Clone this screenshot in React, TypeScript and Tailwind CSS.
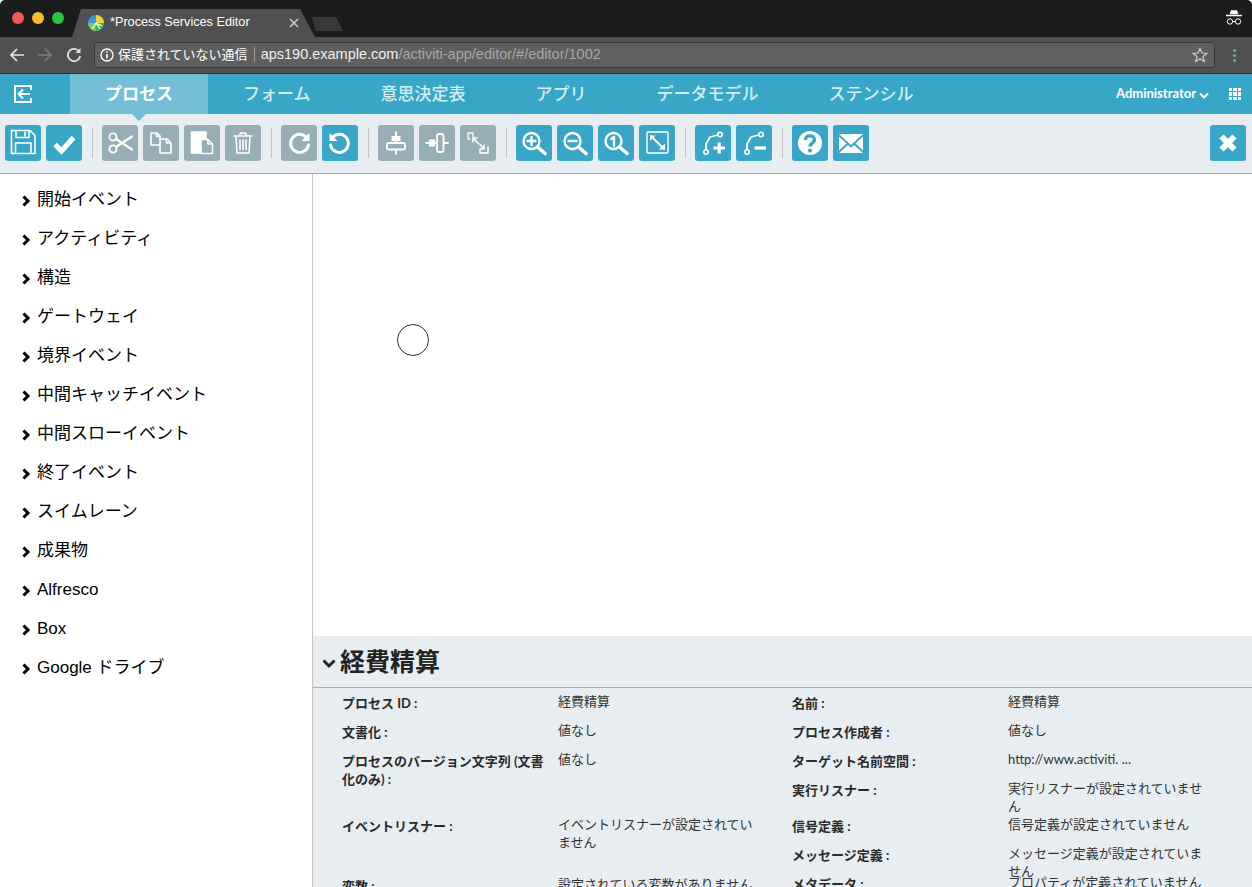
import React from "react";

const S = ({ children, fill = "none" }: { children: React.ReactNode; fill?: string }) => (
  <svg viewBox="0 0 36 36" width="36" height="36" fill={fill} stroke="white" strokeWidth="1.6" strokeLinecap="round" strokeLinejoin="round">
    {children}
  </svg>
);

const Btn = ({ off, children, cls = "" }: { off?: boolean; children: React.ReactNode; cls?: string }) => (
  <div className={`w-9 h-9 shrink-0 rounded-[3px] ${off ? "bg-[#98aeb6]" : "bg-[#38a7c7]"} ${cls}`}>{children}</div>
);

const Sep = () => <div className="w-px h-[30px] bg-[#c0c5ca] ml-[5px] mr-1 shrink-0" />;

const Chevron = ({ cls = "" }: { cls?: string }) => (
  <svg viewBox="0 0 10 12" width="10" height="12" className={cls} fill="none" stroke="black" strokeWidth="3">
    <path d="M2.5 1.5 L7 6 L2.5 10.5" />
  </svg>
);

const items = ["開始イベント", "アクティビティ", "構造", "ゲートウェイ", "境界イベント", "中間キャッチイベント", "中間スローイベント", "終了イベント", "スイムレーン", "成果物", "Alfresco", "Box", "Google ドライブ"];
const tabs = ["フォーム", "意思決定表", "アプリ", "データモデル", "ステンシル"];

const left: [string, string, string][] = [
  ["プロセス ID :", "経費精算", "h-[29px]"],
  ["文書化 :", "値なし", "h-[29px]"],
  ["プロセスのバージョン文字列 (文書化のみ) :", "値なし", "h-[65px]"],
  ["イベントリスナー :", "イベントリスナーが設定されていません", "h-[60px]"],
  ["変数 :", "設定されている変数がありません", "h-[40px]"],
];
const right: [string, string, string][] = [
  ["名前 :", "経費精算", "h-[29px]"],
  ["プロセス作成者 :", "値なし", "h-[29px]"],
  ["ターゲット名前空間 :", "http://www.activiti. ...", "h-[29px]"],
  ["実行リスナー :", "実行リスナーが設定されていません", "h-[36px]"],
  ["信号定義 :", "信号定義が設定されていません", "h-[29px]"],
  ["メッセージ定義 :", "メッセージ定義が設定されていません", "h-[29px]"],
  ["メタデータ :", "プロパティが定義されていません", "h-[40px]"],
];

const Col = ({ rows, cls }: { rows: [string, string, string][]; cls: string }) => (
  <div className={`flex flex-col shrink-0 ${cls}`}>
    {rows.map(([l, v, h]) => (
      <div key={l} className={`flex ${h} shrink-0`}>
        <div className="w-[216px] pr-[10px] pt-1.5 font-bold text-[13px] leading-[18px] text-[#2a2a2a] shrink-0">{l}</div>
        <div className="w-[202px] pt-1 text-[13px] leading-[18px] text-[#333] shrink-0">{v}</div>
      </div>
    ))}
  </div>
);

export default function App() {
  return (
    <div className="w-[1252px] h-[887px] overflow-hidden flex flex-col bg-white rounded-t-[5px] font-['Lato','Noto_Sans_CJK_JP',sans-serif]">
      {/* browser tab strip */}
      <div className="h-[37px] bg-[#1b1c1e] flex items-end relative shrink-0 font-['Liberation_Sans','Noto_Sans_CJK_JP',sans-serif]">
        <div className="flex gap-2 absolute left-3 top-3">
          <div className="w-3 h-3 rounded-full bg-[#f25b55]" />
          <div className="w-3 h-3 rounded-full bg-[#fbbb2e]" />
          <div className="w-3 h-3 rounded-full bg-[#2ac640]" />
        </div>
        <div className="ml-[72px] w-[243px] h-7 bg-[#505050] [clip-path:polygon(0_100%,9px_0,228px_0,100%_100%)] flex items-center pl-4 shrink-0">
          <svg viewBox="0 0 16 16" width="16" height="16" className="shrink-0">
            <circle cx="8" cy="8" r="8" fill="#2f9be0" />
            <path d="M8 8 L16 8 A8 8 0 0 1 8 16 Z" fill="#3fb44a" />
            <path d="M8 8 L8 16 A8 8 0 0 1 0 8 Z" fill="#7ccb4b" />
            <path d="M8 8 L8 0 A8 8 0 0 1 16 8 Z" fill="#f4d03a" />
            <path d="M8 8 L4 14 M8 8 L12 14 M8 8 L14 11" stroke="white" strokeWidth="1.2" />
          </svg>
          <span className="ml-[6px] text-[12.7px] text-white whitespace-nowrap">*Process Services Editor</span>
          <svg viewBox="0 0 10 10" width="10" height="10" className="ml-[39px] shrink-0" stroke="#c8c8c8" strokeWidth="1.6">
            <path d="M1 1 L9 9 M9 1 L1 9" />
          </svg>
        </div>
        <div className="w-[31px] h-[14px] mb-[6px] ml-[-3px] bg-[#37383a] [clip-path:polygon(0_0,78%_0,100%_100%,12%_100%)] shrink-0" />
        <svg viewBox="0 0 18 18" width="18" height="18" className="absolute right-[9px] top-[9px]" fill="white" stroke="white">
          <path d="M5 5 L6 1.5 H12 L13 5 Z" strokeWidth="0.5" />
          <path d="M1 6.5 H17" strokeWidth="1.3" />
          <circle cx="5" cy="12.5" r="2.7" fill="none" strokeWidth="1" />
          <circle cx="13" cy="12.5" r="2.7" fill="none" strokeWidth="1" />
          <path d="M7.7 12.5 H10.3" strokeWidth="1" />
        </svg>
      </div>
      {/* browser toolbar */}
      <div className="h-[37px] bg-[#505050] border-b border-[#2d2d2d] flex items-center shrink-0 font-['Liberation_Sans','Noto_Sans_CJK_JP',sans-serif]">
        <svg viewBox="0 0 16 16" width="16" height="16" className="ml-[9px] shrink-0" fill="none" stroke="#e6e6e6" strokeWidth="1.7">
          <path d="M15 8 H2 M8 2 L2 8 L8 14" />
        </svg>
        <svg viewBox="0 0 16 16" width="16" height="16" className="ml-3 shrink-0" fill="none" stroke="#7c7c7c" strokeWidth="1.7">
          <path d="M1 8 H14 M8 2 L14 8 L8 14" />
        </svg>
        <svg viewBox="0 0 16 16" width="16" height="16" className="ml-[13px] shrink-0" fill="none" stroke="#e0e0e0" strokeWidth="1.8">
          <path d="M13.5 5 A6.2 6.2 0 1 0 14.2 9" />
          <path d="M14.5 1 V6 H9.5 Z" fill="#e0e0e0" stroke="none" />
        </svg>
        <div className="ml-3 w-[1121px] h-[26px] bg-[#5f5f5f] border border-[#3b3b3b] rounded-[3px] flex items-center shrink-0 pl-[5px] mb-px">
          <svg viewBox="0 0 14 14" width="14" height="14" className="shrink-0" fill="none" stroke="white" strokeWidth="1.3">
            <circle cx="7" cy="7" r="6" />
            <path d="M7 6 V10.5" strokeWidth="1.6" />
            <path d="M7 3.2 V4.8" strokeWidth="1.6" />
          </svg>
          <span className="ml-[4px] text-[13px] text-white whitespace-nowrap">保護されていない通信</span>
          <div className="w-px h-[15px] bg-[#9a9a9a] ml-[6px]" />
          <span className="ml-[6px] text-[14.5px] text-[#f0f0f0] whitespace-nowrap">aps190.example.com<span className="text-[#a8a8a8]">/activiti-app/editor/#/editor/1002</span></span>
          <svg viewBox="0 0 16 16" width="16" height="16" className="ml-auto mr-1.5 shrink-0" fill="none" stroke="#d0d0d0" strokeWidth="1.2">
            <path d="M8 1.5 L9.9 6 L14.8 6.4 L11 9.6 L12.2 14.4 L8 11.8 L3.8 14.4 L5 9.6 L1.2 6.4 L6.1 6 Z" />
          </svg>
        </div>
        <div className="ml-[18px] flex flex-col gap-[2px] shrink-0">
          <div className="w-[3px] h-[3px] rounded-full bg-[#5dbb7c]" />
          <div className="w-[3px] h-[3px] rounded-full bg-[#5dbb7c]" />
          <div className="w-[3px] h-[3px] rounded-full bg-[#5dbb7c]" />
        </div>
      </div>
      {/* app nav */}
      <div className="h-10 bg-[#38a7c7] flex items-stretch shrink-0 relative">
        <div className="w-[70px] flex items-center pl-[13px] shrink-0">
          <svg viewBox="0 0 20 20" width="20" height="20" fill="none" stroke="white" strokeWidth="2">
            <path d="M18 6 V2 H2 V18 H18 V14" />
            <path d="M17 10 H6 M10 5.5 L5.5 10 L10 14.5" />
          </svg>
        </div>
        <div className="relative px-[35px] flex items-center bg-[#74bfd6] text-[17px] font-bold text-white">
          プロセス
          <div className="absolute left-[62px] top-full w-[14px] h-[7px] bg-[#74bfd6] [clip-path:polygon(0_0,100%_0,50%_100%)] z-10" />
        </div>
        {tabs.map((t) => (
          <div key={t} className="px-[35px] flex items-center text-[17px] font-medium text-[#d4eef6]">{t}</div>
        ))}
        <div className="ml-auto flex items-center pr-[11px] text-white">
          <span className="text-[13px] font-bold">Administrator</span>
          <svg viewBox="0 0 10 8" width="10" height="8" className="ml-[3px] mt-[4px]" fill="none" stroke="white" strokeWidth="2.2"><path d="M1 1.5 L5 5.5 L9 1.5" /></svg>
          <div className="ml-[20px] grid grid-cols-3 gap-px w-3 h-3">
            {Array.from({ length: 9 }).map((_, i) => <div key={i} className="bg-white" />)}
          </div>
        </div>
      </div>
      {/* editor toolbar */}
      <div className="h-[60px] bg-[#e8edf1] border-b border-[#a9adb3] flex items-center gap-[5px] pl-[5px] pb-px shrink-0">
        <Btn><S><path d="M6.5 5.5 H25 L30 10.5 V28.5 H6.5 Z" /><path d="M11 6 V12.5 H24 V6 M20 7.5 V11" /><path d="M10.5 28 V18 H26 V28" /></S></Btn>
        <Btn><S><path d="M9 19.5 L15.5 26 L27.5 12.5" strokeWidth="5.2" strokeLinecap="butt" strokeLinejoin="miter" /></S></Btn>
        <Sep />
        <Btn off><S><circle cx="11" cy="12" r="3.6" strokeWidth="1.8" /><circle cx="11" cy="24" r="3.6" strokeWidth="1.8" /><path d="M14 14 L30 24.5 M14 22 L30 11.5" strokeWidth="2.2" /></S></Btn>
        <Btn off><S><path d="M8 8 H14 L17 11 V20 H8 Z M13.5 8 V11.5 H17" /><path d="M17 14 H24 L28 18 V28 H17 V20" /><path d="M23.5 14.5 V18 H27.5" /></S></Btn>
        <Btn off><S><path d="M7.5 7 H22 V22 H17 V28 H7.5 Z" fill="white" /><path d="M17 14.5 H24 L28.5 19 V28.5 H17 Z" fill="#98aeb6" /><path d="M24 15 V19 H28" /></S></Btn>
        <Btn off><S><path d="M9 11 H27 M14.5 10.5 L15.5 8 H20.5 L21.5 10.5" /><path d="M11 11.5 L12 28 H24 L25 11.5" /><path d="M15 15 V24.5 M18 15 V24.5 M21 15 V24.5" /></S></Btn>
        <Sep />
        <Btn off><S><path d="M25.5 12.5 A9 9 0 1 0 27.5 20" strokeWidth="3" /><path d="M28.5 8 V16 H20.5 Z" fill="white" stroke="none" /></S></Btn>
        <Btn><S><path d="M10.5 12.5 A9 9 0 1 1 8.5 20" strokeWidth="3" /><path d="M7.5 8 V16 H15.5 Z" fill="white" stroke="none" /></S></Btn>
        <Sep />
        <Btn off><S><path d="M18 7 V29" strokeWidth="1.8" /><rect x="13.5" y="11" width="9" height="5" fill="white" stroke="none" /><rect x="9" y="18" width="18" height="6.5" rx="1.5" fill="#98aeb6" strokeWidth="1.8" /></S></Btn>
        <Btn off><S><path d="M7 18 H29" strokeWidth="1.8" /><rect x="10" y="14.5" width="6" height="7" fill="white" stroke="none" /><rect x="18" y="9" width="6.5" height="18" rx="2" fill="#98aeb6" strokeWidth="1.8" /></S></Btn>
        <Btn off><S><path d="M13 12 V8 H8 V14 H11" strokeWidth="1.3" strokeDasharray="2 1" /><path d="M13 13 L19 19 M13 13 H17 M13 13 V17" strokeWidth="1.6" /><path d="M28 22 V28 H20 V25" strokeWidth="1.5" /><path d="M24 24 L20 19.5 M24 24 H20 M24 24 V20" strokeWidth="1.6" /></S></Btn>
        <Sep />
        <Btn><S><circle cx="15.5" cy="16" r="8" strokeWidth="2.4" /><path d="M21.5 22 L29 28.5" strokeWidth="3.6" /><path d="M11.5 16 H19.5 M15.5 12 V20" strokeWidth="2.4" /></S></Btn>
        <Btn><S><circle cx="15.5" cy="16" r="8" strokeWidth="2.4" /><path d="M21.5 22 L29 28.5" strokeWidth="3.6" /><path d="M11.5 16 H19.5" strokeWidth="2.4" /></S></Btn>
        <Btn><S><circle cx="15.5" cy="16" r="8" strokeWidth="2.4" /><path d="M21.5 22 L29 28.5" strokeWidth="3.6" /><path d="M13.5 14 L16 12 V20.5" strokeWidth="2.4" /></S></Btn>
        <Btn><S><rect x="8" y="7" width="21" height="21" rx="1" strokeWidth="1.4" /><path d="M12 11 L25 24" strokeWidth="2" /><path d="M11 16 V10.5 H16.5 Z M26 18.5 V24.5 H20 Z" fill="white" stroke="none" /></S></Btn>
        <Sep />
        <Btn><S><circle cx="11" cy="27" r="2.2" /><circle cx="25" cy="9.5" r="2.2" /><path d="M11 24.5 V19 L15 12 L22.5 10" strokeWidth="1.8" /><path d="M18.5 23 H30 M24.2 17.5 V28.5" strokeWidth="3.2" strokeLinecap="butt" /></S></Btn>
        <Btn><S><circle cx="11" cy="27" r="2.2" /><circle cx="25" cy="9.5" r="2.2" /><path d="M11 24.5 V19 L15 12 L22.5 10" strokeWidth="1.8" /><path d="M18.5 23 H30" strokeWidth="3.2" strokeLinecap="butt" /></S></Btn>
        <Sep />
        <Btn>
          <S>
            <circle cx="18" cy="18" r="12" fill="white" stroke="none" />
            <path d="M13.5 15 C13.5 9.5 22.5 9.5 22.5 15 C22.5 18 18 18 18 21.5" stroke="#38a7c7" strokeWidth="3.4" strokeLinecap="butt" />
            <circle cx="18" cy="25.5" r="2" fill="#38a7c7" stroke="none" />
          </S>
        </Btn>
        <Btn>
          <S>
            <path d="M6 9 H30 L18 20 Z" fill="white" stroke="none" />
            <path d="M6 11.5 L13.5 18.5 L6 25.5 Z M30 11.5 L22.5 18.5 L30 25.5 Z" fill="white" stroke="none" />
            <path d="M6 28 L15 20 L18 22.7 L21 20 L30 28 Z" fill="white" stroke="none" />
          </S>
        </Btn>
        <Btn cls="ml-auto mr-1.5">
          <S><path d="M11.5 11.5 L24.5 24.5 M24.5 11.5 L11.5 24.5" strokeWidth="6" strokeLinecap="butt" /></S>
        </Btn>
      </div>
      {/* body */}
      <div className="flex-1 flex min-h-0">
        <div className="w-[313px] shrink-0 border-r border-[#c8c8c8] pt-1.5 font-['Liberation_Sans','Noto_Sans_CJK_JP',sans-serif]">
          {items.map((t) => (
            <div key={t} className="h-[39px] flex items-center pl-[21px] text-[17px] text-black whitespace-nowrap">
              <Chevron cls="mt-[3px] mr-[6px] shrink-0" />
              {t}
            </div>
          ))}
        </div>
        <div className="flex-1 min-w-0 flex flex-col">
          <div className="h-[462px] shrink-0 relative bg-white">
            <div className="absolute left-[84px] top-[150px] w-8 h-8 rounded-full border border-[#333] bg-white" />
          </div>
          <div className="flex-1 min-h-0 bg-[#e8edf1] overflow-hidden">
            <div className="h-[52px] border-b border-[#a9adb3] flex items-center pl-[9px]">
              <svg viewBox="0 0 14 10" width="14" height="10" className="mt-[5px] mr-[4px]" fill="none" stroke="#222" strokeWidth="3"><path d="M1.5 1.5 L7 7 L12.5 1.5" /></svg>
              <span className="text-[25px] font-bold text-[#222]">経費精算</span>
            </div>
            <div className="flex">
              <Col rows={left} cls="w-[450px] ml-[29px]" />
              <Col rows={right} cls="w-[420px]" />
            </div>
          </div>
        </div>
      </div>
    </div>
  );
}
